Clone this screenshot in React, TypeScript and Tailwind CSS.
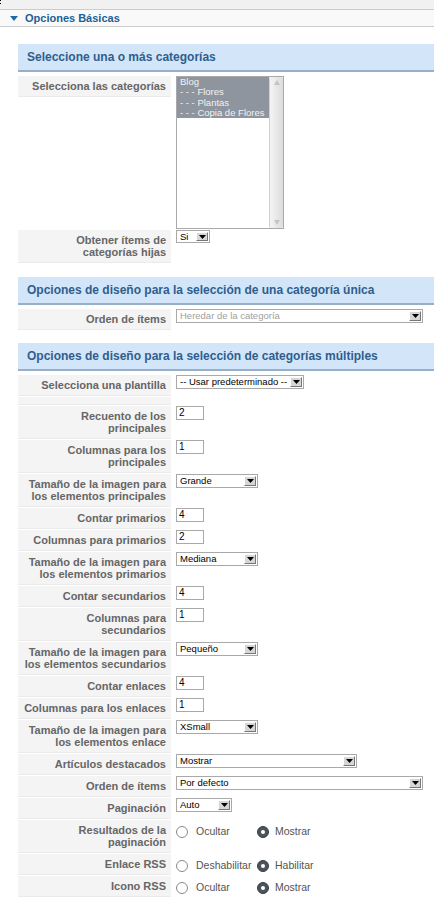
import React from "react";

const font = "font-['Liberation_Sans',Arial,Helvetica,sans-serif]";

function Arrow() {
  return (
    <span className="absolute right-[1px] top-[1px] bottom-[1px] w-[12px] flex items-center justify-center bg-[#d6d6d6] border-t border-l border-t-white border-l-white border-r border-b border-r-[#777] border-b-[#777]">
      <svg width="7" height="4" viewBox="0 0 7 4">
        <path d="M0 0h7L3.5 4z" fill="#000" />
      </svg>
    </span>
  );
}

function Select({
  value,
  className,
  disabled,
}: {
  value: string;
  className: string;
  disabled?: boolean;
}) {
  return (
    <div
      className={`relative flex items-center border border-[#a9a9a9] bg-white pl-[3px] text-[9.5px] leading-none ${
        disabled ? "text-[#a0a0a0]" : "text-black"
      } ${className}`}
    >
      {value}
      <Arrow />
    </div>
  );
}

function Input({ value }: { value: string }) {
  return (
    <div className="w-[28px] h-[14px] border border-[#a9a9a9] bg-white pl-[2px] pt-[1px] text-[10px] leading-[10px] text-black">
      {value}
    </div>
  );
}

function Radio({ checked }: { checked?: boolean }) {
  if (checked)
    return (
      <span className="w-[12px] h-[12px] rounded-full bg-[#4d535b] border border-[#3a3f45] flex items-center justify-center shrink-0">
        <span className="w-[4px] h-[4px] rounded-full bg-white" />
      </span>
    );
  return (
    <span className="w-[12px] h-[12px] rounded-full bg-white border border-[#8a8a8a] shrink-0" />
  );
}

function Radios({ a, b }: { a: string; b: string }) {
  return (
    <div className="flex items-center pt-[4px] text-[10.5px] text-[#555]">
      <div className="flex items-center w-[81px]">
        <Radio />
        <span className="ml-[8px]">{a}</span>
      </div>
      <div className="flex items-center">
        <Radio checked />
        <span className="ml-[6px]">{b}</span>
      </div>
    </div>
  );
}

function Row({
  label,
  children,
}: {
  label: React.ReactNode;
  children?: React.ReactNode;
}) {
  return (
    <div className="flex items-start mb-[1px]">
      <div className="w-[153px] shrink-0 bg-[#f4f4f4] border-b border-[#ebebeb] pt-[4px] pb-[4px] pr-[5px] text-right text-[11px] leading-[12px] font-bold text-[#666]">
        {label}
      </div>
      <div className="ml-[5px]">{children}</div>
    </div>
  );
}

function Header({ title }: { title: string }) {
  return (
    <div className="h-[28px] flex items-center pl-[9px] bg-[#d3e5f9] border-b-2 border-[#97afc8] text-[12px] font-bold text-[#2f5e8d] mb-[4px]">
      {title}
    </div>
  );
}

function ListBox() {
  const opts = ["Blog", "- - - Flores", "- - - Plantas", "- - - Copia de Flores"];
  return (
    <div className="w-[108px] h-[153px] border border-[#a9a9a9] bg-white flex">
      <div className="flex-1 pt-[0px]">
        <div className="bg-[#8e959e]">
          {opts.map((o) => (
            <div
              key={o}
              className="h-[10.25px] pl-[3px] text-[9.5px] leading-[10px] text-[#f2f2f2] whitespace-nowrap"
            >
              {o}
            </div>
          ))}
        </div>
      </div>
      <div className="w-[14px] flex flex-col justify-between items-center bg-gradient-to-r from-[#f4f4f4] to-[#dcdcdc] border-l border-[#d0d0d0] rounded-[2px] py-[3px]">
        <svg width="6" height="5" viewBox="0 0 6 5">
          <path d="M3 0L6 5H0z" fill="#c4c4c4" />
        </svg>
        <svg width="6" height="5" viewBox="0 0 6 5">
          <path d="M0 0h6L3 5z" fill="#c4c4c4" />
        </svg>
      </div>
    </div>
  );
}

export default function App() {
  return (
    <div className={`w-[434px] min-h-[908px] bg-white ${font}`}>
      {/* top strip */}
      <div className="h-[10px] bg-[#f1f1f1] border-b border-[#cccccc] flex flex-col gap-[2px]">
        <span className="w-[1px] h-[1px] bg-black" />
        <span className="w-[1px] h-[1px] bg-black" />
      </div>

      {/* panel title */}
      <div className="h-[17px] flex items-center bg-[#f9f9f9] border-b border-[#cccccc] pl-[10px]">
        <svg width="8" height="5" viewBox="0 0 8 5" className="mt-[1px]">
          <path d="M0 0h8L4 5z" fill="#1f6aa5" />
        </svg>
        <span className="ml-[7px] text-[11px] font-bold text-[#1b5f97]">
          Opciones Básicas
        </span>
      </div>

      <div className="pl-[18px] pt-[17px]">
        {/* section 1 */}
        <Header title="Seleccione una o más categorías" />
        <Row label="Selecciona las categorías">
          <ListBox />
        </Row>
        <Row
          label={
            <>
              Obtener ítems de
              <br />
              categorías hijas
            </>
          }
        >
          <Select value="Si" className="w-[34px] h-[13px]" />
        </Row>

        <div className="h-[13px]" />

        {/* section 2 */}
        <Header title="Opciones de diseño para la selección de una categoría única" />
        <Row label="Orden de ítems">
          <Select value="Heredar de la categoría" className="w-[247px] h-[14px]" disabled />
        </Row>

        <div className="h-[12px]" />

        {/* section 3 */}
        <Header title="Opciones de diseño para la selección de categorías múltiples" />
        <Row label="Selecciona una plantilla">
          <Select value="-- Usar predeterminado --" className="w-[128px] h-[14px]" />
        </Row>
        <div className="w-[153px] h-[8px] bg-[#f4f4f4] border-b border-[#ebebeb] mt-[1px] mb-[1px]" />
        <Row
          label={
            <>
              Recuento de los
              <br />
              principales
            </>
          }
        >
          <Input value="2" />
        </Row>
        <Row
          label={
            <>
              Columnas para los
              <br />
              principales
            </>
          }
        >
          <Input value="1" />
        </Row>
        <Row
          label={
            <>
              Tamaño de la imagen para
              <br />
              los elementos principales
            </>
          }
        >
          <Select value="Grande" className="w-[82px] h-[14px]" />
        </Row>
        <Row label="Contar primarios">
          <Input value="4" />
        </Row>
        <Row label="Columnas para primarios">
          <Input value="2" />
        </Row>
        <Row
          label={
            <>
              Tamaño de la imagen para
              <br />
              los elementos primarios
            </>
          }
        >
          <Select value="Mediana" className="w-[82px] h-[14px]" />
        </Row>
        <Row label="Contar secundarios">
          <Input value="4" />
        </Row>
        <Row
          label={
            <>
              Columnas para
              <br />
              secundarios
            </>
          }
        >
          <Input value="1" />
        </Row>
        <Row
          label={
            <>
              Tamaño de la imagen para
              <br />
              los elementos secundarios
            </>
          }
        >
          <Select value="Pequeño" className="w-[82px] h-[14px]" />
        </Row>
        <Row label="Contar enlaces">
          <Input value="4" />
        </Row>
        <Row label="Columnas para los enlaces">
          <Input value="1" />
        </Row>
        <Row
          label={
            <>
              Tamaño de la imagen para
              <br />
              los elementos enlace
            </>
          }
        >
          <Select value="XSmall" className="w-[82px] h-[14px]" />
        </Row>
        <Row label="Artículos destacados">
          <Select value="Mostrar" className="w-[181px] h-[14px]" />
        </Row>
        <Row label="Orden de ítems">
          <Select value="Por defecto" className="w-[247px] h-[14px]" />
        </Row>
        <Row label="Paginación">
          <Select value="Auto" className="w-[56px] h-[14px]" />
        </Row>
        <Row
          label={
            <>
              Resultados de la
              <br />
              paginación
            </>
          }
        >
          <Radios a="Ocultar" b="Mostrar" />
        </Row>
        <Row label="Enlace RSS">
          <Radios a="Deshabilitar" b="Habilitar" />
        </Row>
        <Row label="Icono RSS">
          <Radios a="Ocultar" b="Mostrar" />
        </Row>
      </div>
    </div>
  );
}
